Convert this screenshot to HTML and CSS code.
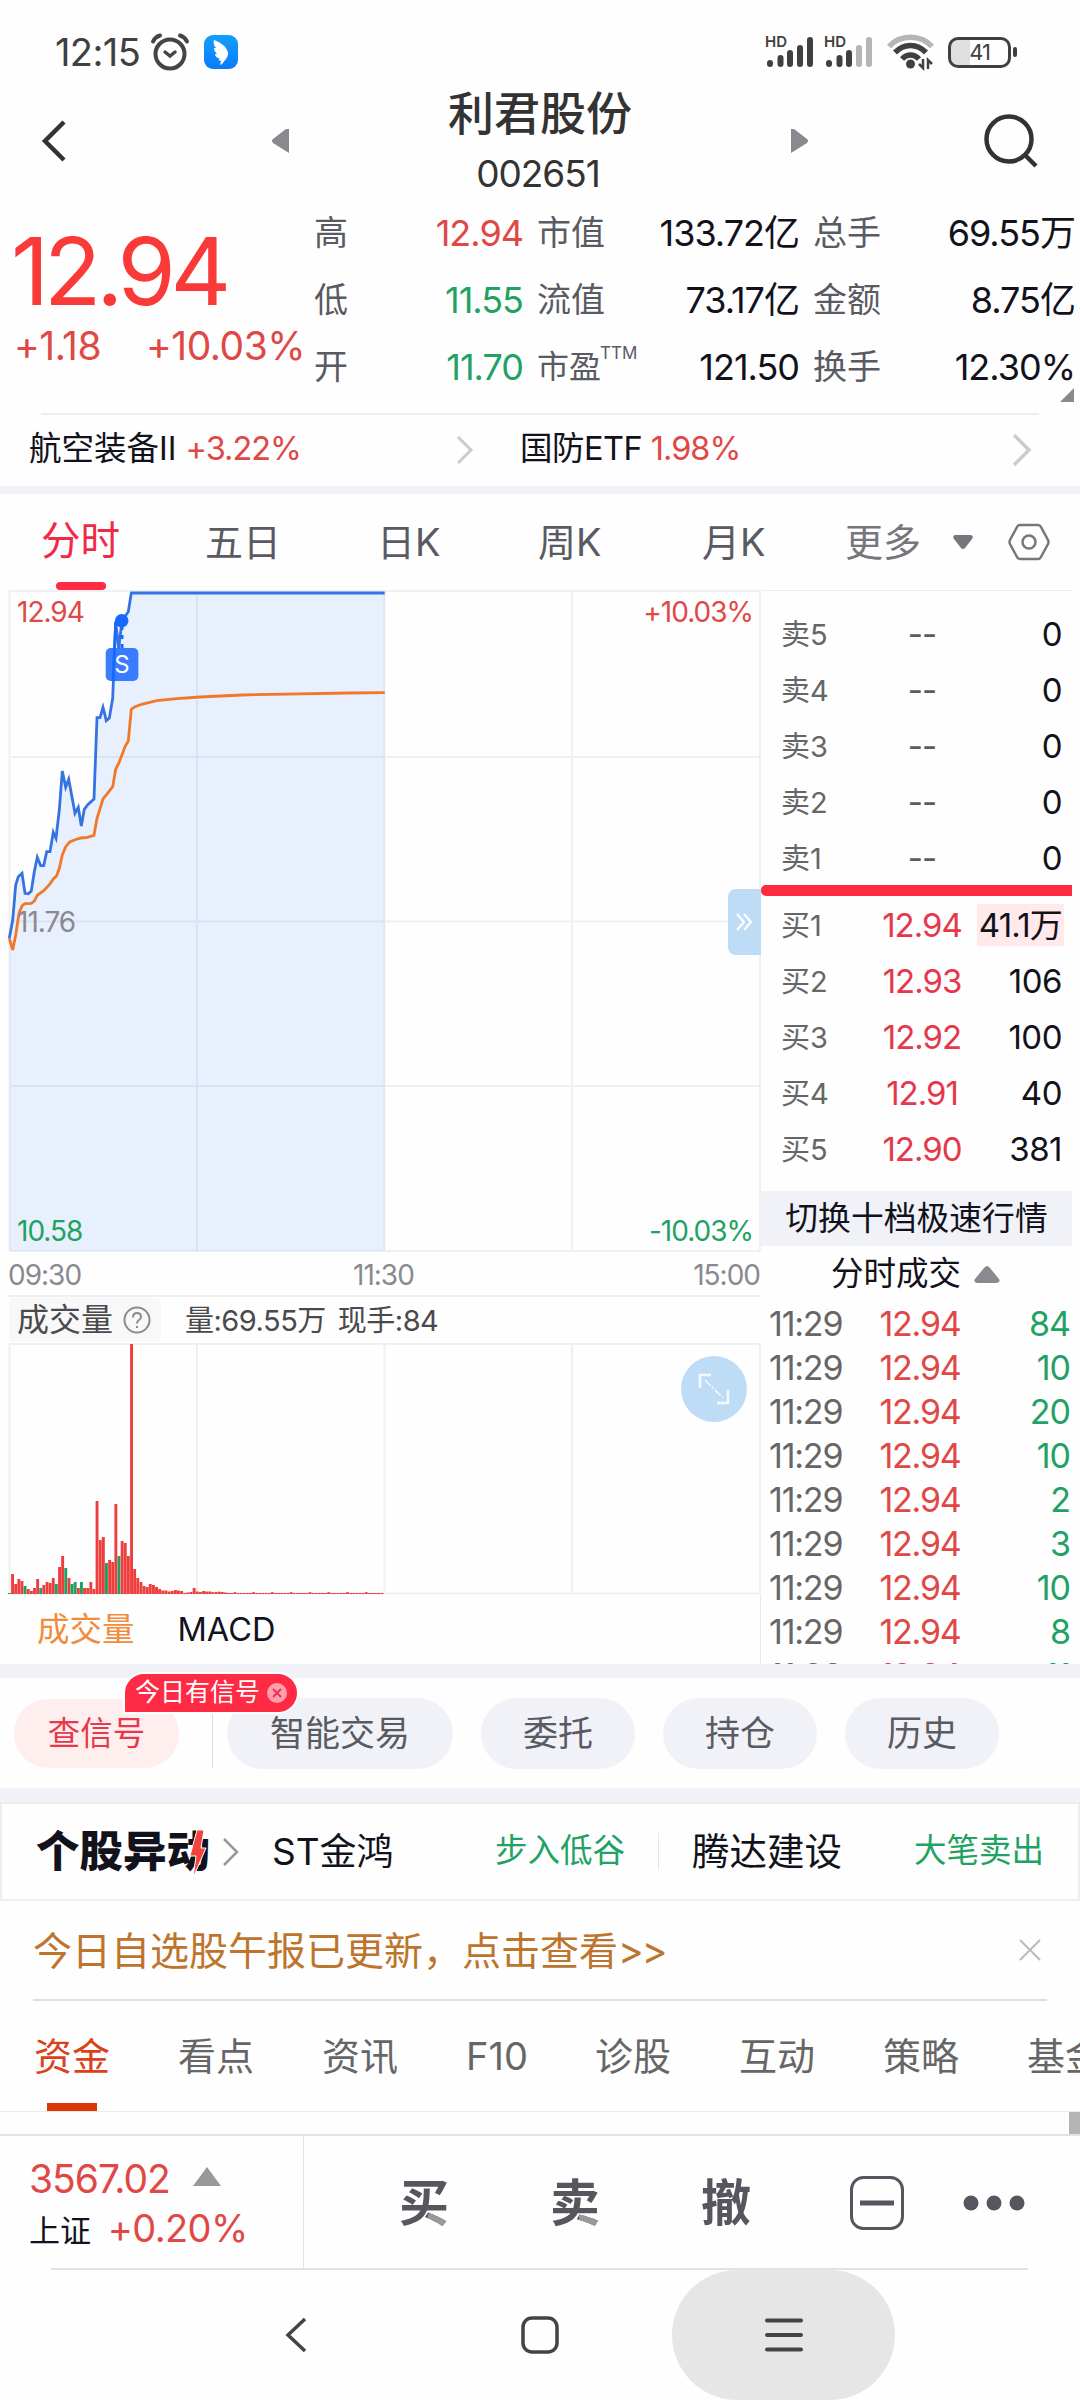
FILE: index.html
```html
<!DOCTYPE html>
<html lang="zh-CN">
<head>
    <meta charset="UTF-8">
    <meta name="viewport" content="width=device-width, initial-scale=1.0">
    <title>利君股份 002651</title>
    <link rel="stylesheet" href="styles.css">
</head>
<body>
    <div class="status-bar">
        <span class="clock">12:15</span>
        <svg class="alarm" width="40" height="38" viewBox="0 0 40 38" fill="none" stroke="#454545" stroke-width="4" stroke-linecap="round">
            <circle cx="20" cy="21" r="14.5"/>
            <path d="M3 8.500Q5 4 10 2.500M37 8.500Q35 4 30 2.500"/>
            <path d="M15 19l5 4 5-4" stroke-width="3.500"/>
        </svg>
        <svg class="app-icon" width="34" height="34" viewBox="0 0 34 34">
            <defs><linearGradient id="appBlue" x1="0" y1="0" x2="0" y2="1"><stop offset="0" stop-color="#12a0fb"/><stop offset="1" stop-color="#0a7bfa"/></linearGradient></defs>
            <rect width="34" height="34" rx="9" fill="url(#appBlue)"/>
            <path d="M10 5c5 2 11 5 13 10 2 3 1 6-1 9l-4 5-2 1 1-4-3-1 2-1c-3-1-5-3-5-5l2 0c-2-2-3-4-3-6l2 0c-2-2-3-5-2-8z" fill="#fff"/>
        </svg>
        <div class="status-right">
            <svg width="50" height="34" viewBox="0 0 50 34">
                <text x="0" y="12" class="hd">HD</text>
                <g stroke="#404040" stroke-width="6" stroke-linecap="round"><path d="M5 29v-1M15.500 29v-6M25 29v-11M35 29v-16M45 29v-24"/></g>
            </svg>
            <svg width="50" height="34" viewBox="0 0 50 34">
                <text x="0" y="12" class="hd">HD</text>
                <g stroke="#404040" stroke-width="6" stroke-linecap="round"><path d="M5 29v-1M15.500 29v-6M25 29v-11"/><path d="M35 29v-16M45 29v-24" stroke="#b5b5b5"/></g>
            </svg>
            <svg class="wifi" width="47" height="36" viewBox="0 0 47 36" fill="none" stroke-width="5.500">
                <path d="M2 12.500C13 0 34 0 45 12.500" stroke="#b5b5b5"/>
                <path d="M8 18.500C17 9 30 9 39 18.500M15 25C20 19.500 27 19.500 32 25" stroke="#404040"/>
                <circle cx="23.500" cy="30" r="4.500" fill="#404040"/>
                <path d="M36 25v9l-4-4M41 35v-9l4 4" stroke="#404040" stroke-width="2.500"/>
            </svg>
            <div class="battery"><span>41</span></div>
        </div>
    </div>

    <header class="title-bar">
        <svg class="back" width="26" height="44" viewBox="0 0 26 44" fill="none" stroke="#333" stroke-width="4.500"><path d="M23 3L4 22l19 19"/></svg>
        <svg class="prev" width="19" height="26" viewBox="0 0 19 26"><path d="M18 1v24L2 15q-2-2 0-4L15 1z" fill="#8a8990"/></svg>
        <div class="stock-name">
            <h1>利君股份</h1>
            <p>002651</p>
        </div>
        <svg class="next" width="19" height="26" viewBox="0 0 19 26"><path d="M1 1v24L17 15q2-2 0-4L4 1z" fill="#8a8990"/></svg>
        <svg class="search" width="56" height="56" viewBox="0 0 56 56" fill="none" stroke="#333" stroke-width="4.500"><circle cx="26" cy="26" r="22.500"/><path d="M42 42l11 11"/></svg>
    </header>

    <section class="quote">
        <div class="price">
            <div class="last">12.94</div>
            <div class="change"><span>+1.18</span><span>+10.03%</span></div>
        </div>
        <div class="stats">
            <label>高</label><b class="red">12.94</b><label>市值</label><b>133.72亿</b><label>总手</label><b>69.55万</b>
            <label>低</label><b class="green">11.55</b><label>流值</label><b>73.17亿</b><label>金额</label><b>8.75亿</b>
            <label>开</label><b class="green">11.70</b><label class="pe">市盈<sup>TTM</sup></label><b>121.50</b><label>换手</label><b>12.30%</b>
        </div>
        <i class="corner"></i>
    </section>

    <section class="sectors">
        <div class="sector">航空装备II <span class="red">+3.22%</span></div>
        <svg width="18" height="30" viewBox="0 0 18 30" fill="none" stroke="#ccc" stroke-width="3"><path d="M2 2l13 13L2 28"/></svg>
        <div class="sector second">国防ETF <span class="red">1.98%</span></div>
        <svg width="20" height="34" viewBox="0 0 20 34" fill="none" stroke="#ccc" stroke-width="3.500"><path d="M2 2l15 15L2 32"/></svg>
    </section>

    <nav class="period-tabs">
        <span class="active">分时</span>
        <span>五日</span>
        <span>日K</span>
        <span>周K</span>
        <span>月K</span>
        <span class="more">更多</span>
        <svg class="caret" width="22" height="16" viewBox="0 0 22 16"><path d="M3 1h16q3 1 1 4l-7 9q-2 2-4 0L2 5Q0 2 3 1z" fill="#77767c"/></svg>
        <svg class="hex" width="42" height="38" viewBox="0 0 42 38" fill="none" stroke="#77767c" stroke-width="2.500"><path d="M12 2h18q2 0 3 2l7 13q1 2 0 4l-7 13q-1 2-3 2H12q-2 0-3-2L2 21q-1-2 0-4L9 4q1-2 3-2z"/><circle cx="21" cy="19" r="6.500"/></svg>
    </nav>

    <main class="board">
        <div class="charts">
            <div class="price-chart">
                <svg width="752" height="662" viewBox="0 0 752 662">
                    <g stroke="#eff0f2" stroke-width="2">
                        <path d="M0 1h751M0 167h751M0 331.500h751M0 496h751M0 661h751M.5 1v660M188 1v660M375.500 1v660M563 1v660M751 1v660"/>
                    </g>
                    <polygon id="area" fill="#3a7bff" fill-opacity=".11"/>
                    <polyline id="avgLine" fill="none" stroke="#f07828" stroke-width="2.800"/>
                    <polyline id="priceLine" fill="none" stroke="#3573e3" stroke-width="2.800"/>
                    <path d="M113 36v22" stroke="#1668ff" stroke-width="3" stroke-dasharray="4 5"/>
                    <rect x="96.700" y="58" width="32.700" height="33" rx="5" fill="#2a72ff" fill-opacity=".92"/>
                    <path d="M106.500 32L104 91" stroke="#1668ff" stroke-width="2.500"/>
                    <circle cx="112.700" cy="30.700" r="6.800" fill="#1668ff"/>
                    <text x="113" y="83" class="mark">S</text>
                </svg>
                <span class="tag top-left red">12.94</span>
                <span class="tag top-right red">+10.03%</span>
                <span class="tag mid-left">11.76</span>
                <span class="tag bottom-left green">10.58</span>
                <span class="tag bottom-right green">-10.03%</span>
                <div class="fold">
                    <svg width="20" height="18" viewBox="0 0 20 18" fill="none" stroke="#fff" stroke-width="2"><path d="M2 1l7 8-7 8M9 1l7 8-7 8"/></svg>
                </div>
            </div>
            <div class="times"><span>09:30</span><span>11:30</span><span>15:00</span></div>
            <div class="volume-head">
                <div class="chip">成交量
                    <svg width="28" height="28" viewBox="0 0 28 28" fill="none" stroke="#8a8990" stroke-width="2"><circle cx="14" cy="14" r="12.500"/><path d="M10 11.500q0-4.500 4-4.500t4 4q0 2-2.500 3.500-1.500 1-1.500 3M14 20v2"/></svg>
                </div>
                <span>量:69.55万</span><span>现手:84</span>
            </div>
            <div class="volume-chart">
                <svg id="volume" width="752" height="252" viewBox="0 0 752 252">
                    <path d="M0 1h751M0 250.500h751M.5 1v250M188 1v250M375.500 1v250M563 1v250M751 1v250" stroke="#eff0f2" stroke-width="2"/>
                </svg>
                <div class="expand">
                    <svg width="32" height="32" viewBox="0 0 32 32" fill="none" stroke="#f4f9fd" stroke-width="2.500"><path d="M2 15V2h11M30 17v13H19"/><path d="M7 7l18 18" stroke-width="1.500" stroke-dasharray="8 2 2 2"/></svg>
                </div>
            </div>
            <div class="indicator-tabs"><span class="active">成交量</span><span>MACD</span></div>
        </div>

        <div class="orders">
            <div class="asks">
                <div class="row"><label>卖5</label><em>--</em><b>0</b></div>
                <div class="row"><label>卖4</label><em>--</em><b>0</b></div>
                <div class="row"><label>卖3</label><em>--</em><b>0</b></div>
                <div class="row"><label>卖2</label><em>--</em><b>0</b></div>
                <div class="row"><label>卖1</label><em>--</em><b>0</b></div>
            </div>
            <div class="spread"></div>
            <div class="bids">
                <div class="row"><label>买1</label><em>12.94</em><b class="flash">41.1万</b></div>
                <div class="row"><label>买2</label><em>12.93</em><b>106</b></div>
                <div class="row"><label>买3</label><em>12.92</em><b>100</b></div>
                <div class="row"><label>买4</label><em>12.91</em><b>40</b></div>
                <div class="row"><label>买5</label><em>12.90</em><b>381</b></div>
            </div>
            <div class="switch">切换十档极速行情</div>
            <div class="deals-head">分时成交
                <svg width="26" height="19" viewBox="0 0 26 19"><path d="M3 18h20q4-1 2-4L16 3q-3-4-6 0L1 14q-2 3 2 4z" fill="#8a8990"/></svg>
            </div>
            <div class="deals">
                <div><time>11:29</time><em>12.94</em><b>84</b></div>
                <div><time>11:29</time><em>12.94</em><b>10</b></div>
                <div><time>11:29</time><em>12.94</em><b>20</b></div>
                <div><time>11:29</time><em>12.94</em><b>10</b></div>
                <div><time>11:29</time><em>12.94</em><b>2</b></div>
                <div><time>11:29</time><em>12.94</em><b>3</b></div>
                <div><time>11:29</time><em>12.94</em><b>10</b></div>
                <div><time>11:29</time><em>12.94</em><b>8</b></div>
                <div><time>11:29</time><em>12.94</em><b>11</b></div>
            </div>
        </div>
    </main>

    <section class="actions">
        <div class="pill signal">查信号
            <div class="bubble">今日有信号
                <svg width="20" height="20" viewBox="0 0 20 20"><circle cx="10" cy="10" r="10" fill="#ff9fab"/><path d="M6 6l8 8M14 6l-8 8" stroke="#e8304a" stroke-width="1.800"/></svg>
            </div>
        </div>
        <i class="sep"></i>
        <div class="pill wide">智能交易</div>
        <div class="pill">委托</div>
        <div class="pill">持仓</div>
        <div class="pill">历史</div>
    </section>

    <section class="movers">
        <div class="movers-logo">个股异动
            <svg width="18" height="48" viewBox="0 0 18 48"><path d="M8 0h7l-3 18h5L4 48l3-22H1z" fill="#f5423f" stroke="#fff" stroke-width="1"/></svg>
        </div>
        <svg class="arrow" width="16" height="28" viewBox="0 0 16 28" fill="none" stroke="#999" stroke-width="2.500"><path d="M1 1l13 13L1 27"/></svg>
        <span class="name">ST金鸿</span>
        <span class="event">步入低谷</span>
        <i class="sep"></i>
        <span class="name">腾达建设</span>
        <span class="event">大笔卖出</span>
    </section>

    <section class="notice">
        <span>今日自选股午报已更新，点击查看<span class="go">&gt;&gt;</span></span>
        <svg width="24" height="24" viewBox="0 0 24 24" stroke="#bbb" stroke-width="2"><path d="M2 2l20 20M22 2L2 22"/></svg>
    </section>

    <nav class="info-tabs">
        <span class="active">资金</span><span>看点</span><span>资讯</span><span>F10</span><span>诊股</span><span>互动</span><span>策略</span><span>基金</span>
    </nav>
    <div class="scroll-strip"><i></i></div>

    <footer class="trade-bar">
        <div class="index">
            <div class="index-value">3567.02 <svg width="28" height="19" viewBox="0 0 28 19"><path d="M14 0l14 19H0z" fill="#999"/></svg></div>
            <div class="index-change">上证 <span>+0.20%</span></div>
        </div>
        <span class="trade two-tone">买</span>
        <span class="trade two-tone">卖</span>
        <span class="trade">撤</span>
        <svg class="minus" width="54" height="54" viewBox="0 0 54 54" fill="none" stroke="#55565e"><rect x="1.500" y="1.500" width="51" height="51" rx="12" stroke-width="3"/><path d="M10 27h34" stroke-width="5"/></svg>
        <svg class="dots" width="62" height="16" viewBox="0 0 62 16" fill="#55565e"><circle cx="8" cy="8" r="7.500"/><circle cx="31" cy="8" r="7.500"/><circle cx="54" cy="8" r="7.500"/></svg>
    </footer>

    <div class="system-nav">
        <svg width="22" height="36" viewBox="0 0 22 36" fill="none" stroke="#444" stroke-width="3.500"><path d="M20 2L3 18l17 16"/></svg>
        <svg width="38" height="38" viewBox="0 0 38 38" fill="none" stroke="#444" stroke-width="3.500"><rect x="2" y="2" width="34" height="34" rx="9"/></svg>
        <div class="pressed">
            <svg width="38" height="34" viewBox="0 0 38 34" stroke="#444" stroke-width="4" stroke-linecap="round"><path d="M2 2.500h34M2 17h34M2 31.500h34"/></svg>
        </div>
    </div>

    <script>
    const price = '0.3,348.3 3.7,330 6.7,295 9.3,286.7 13,283.3 16,303.3 19.3,303.7 22.3,301 25.3,281.7 28.3,267.3 31.7,275.7 34.7,275.7 37.7,261.7 41,261.7 44.3,242.3 47,248.3 50.3,220 53.3,181 56.7,197.3 59.7,189.3 66,223.3 69.3,217.3 72.3,236 75.3,219.3 78.7,214.7 85,209 88,127.7 91,127.7 94,117.3 97.3,130.7 100.3,128 103.7,108.3 106.7,31.7 109.7,58.3 113,30 116.3,26 119.3,21.7 122.3,3 375.7,3';
    const average = '0.3,348.3 3.7,360 6.7,345 10,323.3 13,316 16,313.7 22.3,313.3 25.3,311 28.3,305.3 34.7,300.7 41,294 44.3,289 47.7,285.7 50.3,278.3 53.3,265 56.7,256.7 60.7,252 66,249.7 72,248 78.3,247.3 85,245.3 88,228.3 94,209 97.7,204.3 103.7,196.7 106.7,179.3 110,172.7 116.3,156 119.3,151 122.3,119.3 126,116.7 132.7,114.3 147.7,110.7 167.7,108.7 191,107 233,105 262,104.3 340,103 375.7,102.7';
    document.getElementById('priceLine').setAttribute('points', price);
    document.getElementById('avgLine').setAttribute('points', average);
    document.getElementById('area').setAttribute('points', price + ' 375.7,661 0.3,661');

    // one bar per minute, negative = falling minute
    const volumes = [-1, 20, 10, 15, 13, -8, 5, 3, 6, 15, -6, 9, 12, 11, 16, -10, 27, 38, -26, 16, -10, -12, 6, -12, 6, 6, 12, 5, 93, 54, 57, -31, 34, 32, 90, -38, 53, 51, 38, 250, 25, 16, 12, 8, 7, 10, 9, 7, 5, 3.5, 3.5, 2.5, 3, 4, 3.5, 3, 1, 1.5, 2, 6, 2.5, 2, 3, 2.5, 2.5, 1.8, 2, 2.3, 2, 1.5];
    const svg = document.getElementById('volume');
    for (let i = 0; i < 120; i++) {
        const v = i < volumes.length ? volumes[i] : (i % 6 === 0 ? 1.8 : 1);
        const bar = document.createElementNS('http://www.w3.org/2000/svg', 'rect');
        bar.setAttribute('x', (i * 3.13 - 1).toFixed(1));
        bar.setAttribute('y', 251 - Math.abs(v));
        bar.setAttribute('width', 2.9);
        bar.setAttribute('height', Math.abs(v));
        bar.setAttribute('fill', v < 0 ? '#1fa060' : '#ee3d3d');
        svg.appendChild(bar);
    }
    </script>
</body>
</html>
```

FILE: styles.css
```css
* {
    box-sizing: border-box;
}

body {
    margin: 0;
    width: 1080px;
    height: 2400px;
    overflow: hidden;
    background: #fefefe;
    color: #12121c;
    font-family: Inter, "Noto Sans CJK SC", sans-serif;
    line-height: 1;
    white-space: nowrap;
}

svg {
    display: block;
    flex: none;
    overflow: visible;
}

b, em {
    font-weight: 400;
    font-style: normal;
}

.red {
    color: #e04846;
}

.green {
    color: #1fa264;
}

/* status bar */
.status-bar {
    display: flex;
    align-items: center;
    height: 75px;
    padding: 29px 69px 0 55px;
    color: #404040;
}

.clock {
    width: 95px;
    font-size: 38px;
    letter-spacing: -.6px;
}

.app-icon {
    margin-left: 14px;
}

.status-right {
    display: flex;
    align-items: center;
    gap: 9px;
    margin-left: auto;
}

.hd {
    font-size: 15px;
    font-weight: 600;
    fill: #404040;
}

.wifi {
    margin-left: 4px;
}

.battery {
    position: relative;
    width: 63px;
    height: 31px;
    margin-left: 5px;
    border: 3.5px solid #404040;
    border-radius: 10px;
    background: linear-gradient(90deg, #e0e0e0 19px, #fefefe 19px);
    background-clip: padding-box;
    font-size: 22px;
    line-height: 24px;
    text-align: center;
    letter-spacing: -1px;
}

.battery::after {
    content: '';
    position: absolute;
    right: -9px;
    top: 7px;
    width: 4px;
    height: 10px;
    border-radius: 2px;
    background: #404040;
}

/* title */
.title-bar {
    display: flex;
    align-items: center;
    height: 131px;
    padding: 0 41px;
    color: #333;
}

.prev {
    margin-left: 204px;
}

.stock-name {
    flex: 1;
    text-align: center;
}

.stock-name h1 {
    margin: 0 0 19px;
    font-size: 46px;
    font-weight: 500;
}

.stock-name p {
    margin: 0 4px 0 0;
    font-size: 37px;
    letter-spacing: -1px;
}

.next {
    margin-right: 174px;
}

/* quote */
.quote {
    position: relative;
    display: flex;
    height: 207px;
    padding-left: 14px;
}

.price {
    width: 300px;
}

.last {
    margin: 27px 0 0 -3px;
    color: #f93a38;
    font-size: 94px;
    line-height: 76px;
    letter-spacing: -5.2px;
}

.change {
    display: flex;
    gap: 45px;
    margin-top: 17px;
    color: #e04846;
    font-size: 39px;
    letter-spacing: -.5px;
}

.stats {
    display: grid;
    grid-template-columns: 94px 115px 103px 173px 107px 169px;
    grid-auto-rows: 67px;
    align-content: start;
    margin-top: -7px;
    align-items: center;
    font-size: 36px;
}

.stats label {
    color: #5a5a62;
    font-size: 34px;
}

.stats b {
    justify-self: end;
    letter-spacing: -1px;
}

.stats label:nth-child(6n + 3),
.stats label:nth-child(6n + 5) {
    padding-left: 14px;
}

.stats .pe {
    font-size: 32px;
}

.stats sup {
    position: relative;
    top: -7px;
    left: -1px;
    font-size: 17px;
    line-height: 0;
}

.corner {
    position: absolute;
    right: 6px;
    bottom: 11px;
    border-bottom: 14px solid #8a8990;
    border-left: 14px solid transparent;
}

/* sectors */
.sectors {
    display: flex;
    align-items: center;
    height: 81px;
    padding: 0 48px 0 29px;
    border-bottom: 8px solid #f1f2f7;
    background: linear-gradient(#eee, #eee) 41px 0 / 998px 2px no-repeat;
    font-size: 32.5px;
}

.sector {
    width: 427px;
}

.sector span {
    letter-spacing: -1px;
}

.second {
    flex: 1;
    width: auto;
    margin-left: 46px;
    letter-spacing: -.5px;
}

/* period tabs */
.period-tabs {
    position: relative;
    display: grid;
    grid-template-columns: 164px 172px 161px 164px 143px 107px 56px 42px;
    align-items: center;
    height: 96px;
    padding-left: 41px;
    color: #5a5a62;
    font-size: 38px;
}

.period-tabs .active {
    color: #f02a45;
    font-size: 39.5px;
}

.period-tabs .active::after {
    content: '';
    position: absolute;
    left: 56px;
    bottom: 0;
    width: 50px;
    height: 8px;
    border-radius: 4px;
    background: #ff2b45;
}

.period-tabs .more {
    color: #77767c;
}

/* chart and order book */
.board {
    display: flex;
    height: 1088px;
    overflow: hidden;
    border-bottom: 14px solid #f1f2f7;
}

.charts {
    width: 761px;
    padding-left: 9px;
}

.price-chart {
    position: relative;
    height: 662px;
}

.mark {
    fill: #fff;
    font-size: 24px;
    text-anchor: middle;
}

.tag {
    position: absolute;
    color: #8a8990;
    font-size: 28px;
    letter-spacing: -1px;
}

.tag.red {
    color: #e04846;
}

.tag.green {
    color: #1fa264;
}

.top-left {
    left: 8px;
    top: 8px;
}

.top-right {
    right: 8px;
    top: 8px;
}

.mid-left {
    left: 8px;
    top: 318px;
}

.bottom-left {
    left: 8px;
    bottom: 7px;
}

.bottom-right {
    right: 8px;
    bottom: 7px;
}

.fold {
    position: absolute;
    right: 0;
    top: 299px;
    display: flex;
    align-items: center;
    justify-content: center;
    width: 33px;
    height: 66px;
    border-radius: 8px 0 0 8px;
    background: #bedcf5;
}

.times {
    display: grid;
    grid-template-columns: 345px 1fr auto;
    height: 45px;
    margin-left: -1px;
    padding: 9px 1px 0 0;
    border-bottom: 2px solid #efefef;
    color: #8a8990;
    font-size: 28px;
    letter-spacing: -1px;
}

.volume-head {
    display: flex;
    align-items: center;
    gap: 12px;
    height: 46px;
    color: #4a4a4e;
    font-size: 29px;
    letter-spacing: -.5px;
}

.chip {
    display: flex;
    align-items: center;
    gap: 10px;
    width: 152px;
    height: 44px;
    margin-right: 12px;
    padding-left: 8px;
    border-radius: 6px;
    background: #f8f8f8;
    font-size: 32px;
    letter-spacing: 0;
}

.volume-chart {
    position: relative;
    height: 252px;
}

.expand {
    position: absolute;
    right: 14px;
    top: 13px;
    display: flex;
    align-items: center;
    justify-content: center;
    width: 66px;
    height: 66px;
    border-radius: 50%;
    background: #bedcf5;
}

.indicator-tabs {
    display: flex;
    gap: 43px;
    height: 80px;
    padding: 19px 0 0 28px;
    border-right: 1px solid #e8e8e8;
    font-size: 32.5px;
}

.indicator-tabs .active {
    color: #f08c3c;
}

.orders {
    width: 311px;
    border-top: 1px solid #eee;
}

.asks {
    padding-top: 15px;
}

.row {
    display: grid;
    grid-template-columns: 80px 122px 79px;
    align-items: center;
    height: 56px;
    padding-left: 20px;
    font-size: 33px;
}

.row label {
    color: #666;
    font-size: 29px;
}

.row em {
    justify-self: center;
    color: #5a5a62;
    letter-spacing: -1px;
}

.row b {
    justify-self: end;
    letter-spacing: -.5px;
}

.bids em {
    color: #e5384c;
}

.row .flash {
    margin-right: -2px;
    padding: 5px 2px 4px;
    background: #ffe9ea;
    letter-spacing: -.8px;
}

.spread {
    height: 11px;
    margin: -1px 0 1px;
    border-radius: 5px 0 0 5px;
    background: #ff2a40;
}

.switch {
    height: 55px;
    margin-top: 14px;
    background: #f1f2f7;
    font-size: 32.8px;
    line-height: 55px;
    text-align: center;
}

.deals-head {
    display: flex;
    align-items: center;
    gap: 13px;
    height: 56px;
    padding-left: 70px;
    font-size: 32.5px;
}

.deals > div {
    display: grid;
    grid-template-columns: 90px 122px 89px;
    align-items: center;
    height: 44px;
    padding-left: 8px;
    font-size: 34px;
}

.deals time {
    color: #666;
    letter-spacing: -1.2px;
}

.deals em {
    justify-self: center;
    color: #e04846;
    letter-spacing: -1.2px;
}

.deals b {
    justify-self: end;
    color: #1fa264;
    letter-spacing: -1px;
}

/* action pills */
.actions {
    display: flex;
    align-items: center;
    gap: 28px;
    height: 124px;
    padding: 0 14px;
    border-bottom: 14px solid #f1f2f7;
}

.pill {
    width: 154px;
    height: 71px;
    border-radius: 36px;
    background: #f1f2f7;
    color: #5a5a62;
    font-size: 35px;
    line-height: 70px;
    text-align: center;
}

.pill.wide {
    width: 226px;
    margin-left: -14px;
}

.pill.signal {
    position: relative;
    width: 165px;
    height: 69px;
    background: #ffeeee;
    color: #e8384c;
    font-size: 32.5px;
}

.bubble {
    position: absolute;
    left: 109px;
    top: -27px;
    display: flex;
    align-items: center;
    gap: 7px;
    width: 176px;
    height: 42px;
    padding-left: 10px;
    border: 2px solid #fff;
    border-radius: 21px 21px 21px 3px;
    background: #ff2a44;
    color: #fff;
    font-size: 25px;
    line-height: 1;
}

.actions .sep {
    width: 1px;
    height: 54px;
    margin: 16px 0 0 5px;
    background: #ddd;
}

/* movers */
.movers {
    display: flex;
    align-items: center;
    height: 99px;
    padding-left: 34px;
    border: 2px solid #eee;
}

.movers-logo {
    position: relative;
    width: 187px;
    font-size: 43.5px;
    font-weight: 900;
}

.movers-logo svg {
    position: absolute;
    left: 153px;
    top: 0;
}

.movers .name {
    width: 223px;
    margin-left: 33px;
    font-size: 37px;
}

.movers .event {
    color: #1fa264;
    font-size: 32.5px;
}

.movers .sep {
    width: 1px;
    height: 37px;
    margin-left: 33px;
    background: #e5e5e5;
}

.movers .sep + .name {
    width: 222px;
    font-size: 37.5px;
}

/* notice */
.notice {
    display: flex;
    align-items: center;
    justify-content: space-between;
    height: 100px;
    margin: 0 33px;
    padding-right: 5px;
    border-bottom: 2px solid #e0e0e0;
    color: #bd742c;
    font-size: 39px;
}

.notice .go {
    letter-spacing: -2px;
}

/* info tabs */
.info-tabs {
    position: relative;
    display: grid;
    grid-template-columns: 144px 144px 144px 129px 144px 144px 144px 144px;
    align-items: center;
    height: 111px;
    padding-left: 34px;
    overflow: hidden;
    border-bottom: 1px solid #eaeaea;
    color: #666;
    font-size: 38px;
}

.info-tabs .active {
    color: #d9431a;
}

.info-tabs .active::after {
    content: '';
    position: absolute;
    left: 47px;
    bottom: 0;
    width: 50px;
    height: 8px;
    background: #dd3503;
}

.scroll-strip {
    height: 24px;
    border-bottom: 2px solid #e3e3e3;
}

.scroll-strip i {
    display: block;
    width: 11px;
    height: 22px;
    margin-left: auto;
    background: #b5b5b5;
}

/* trade bar */
.trade-bar {
    display: flex;
    align-items: center;
    height: 134px;
    color: #55565e;
    background: linear-gradient(#e2e2e2, #e2e2e2) 51px 100% / 977px 2px no-repeat;
}

.index {
    width: 304px;
    height: 132px;
    margin-bottom: 2px;
    padding: 23px 0 0 29px;
    border-right: 1px solid #e3e3e3;
}

.index-value {
    display: flex;
    gap: 23px;
    height: 50px;
    color: #e04846;
    font-size: 39px;
    letter-spacing: -1px;
}

.index-value svg {
    margin-top: 8px;
}

.index-change {
    color: #12121c;
    font-size: 31px;
}

.index-change span {
    margin-left: 8px;
    color: #e04846;
    font-size: 38px;
    letter-spacing: -.6px;
}

.trade {
    width: 151px;
    font-size: 50px;
    font-weight: 700;
}

.two-tone {
    background: linear-gradient(#999, #999) 29px 36px / 22px 20px no-repeat, #55565e;
    background-clip: text;
    -webkit-background-clip: text;
    color: transparent;
}

.index + .trade {
    margin-left: 95px;
}

.minus {
    margin-left: -2px;
}

.dots {
    margin-left: 59px;
}

/* system navigation */
.system-nav {
    display: flex;
    align-items: center;
    height: 130px;
    padding-left: 285px;
}

.system-nav svg + svg {
    margin-left: 214px;
}

.pressed {
    display: flex;
    align-items: center;
    justify-content: center;
    width: 223px;
    height: 130px;
    margin-left: 113px;
    border-radius: 65px;
    background: #e6e6e6;
}
```
